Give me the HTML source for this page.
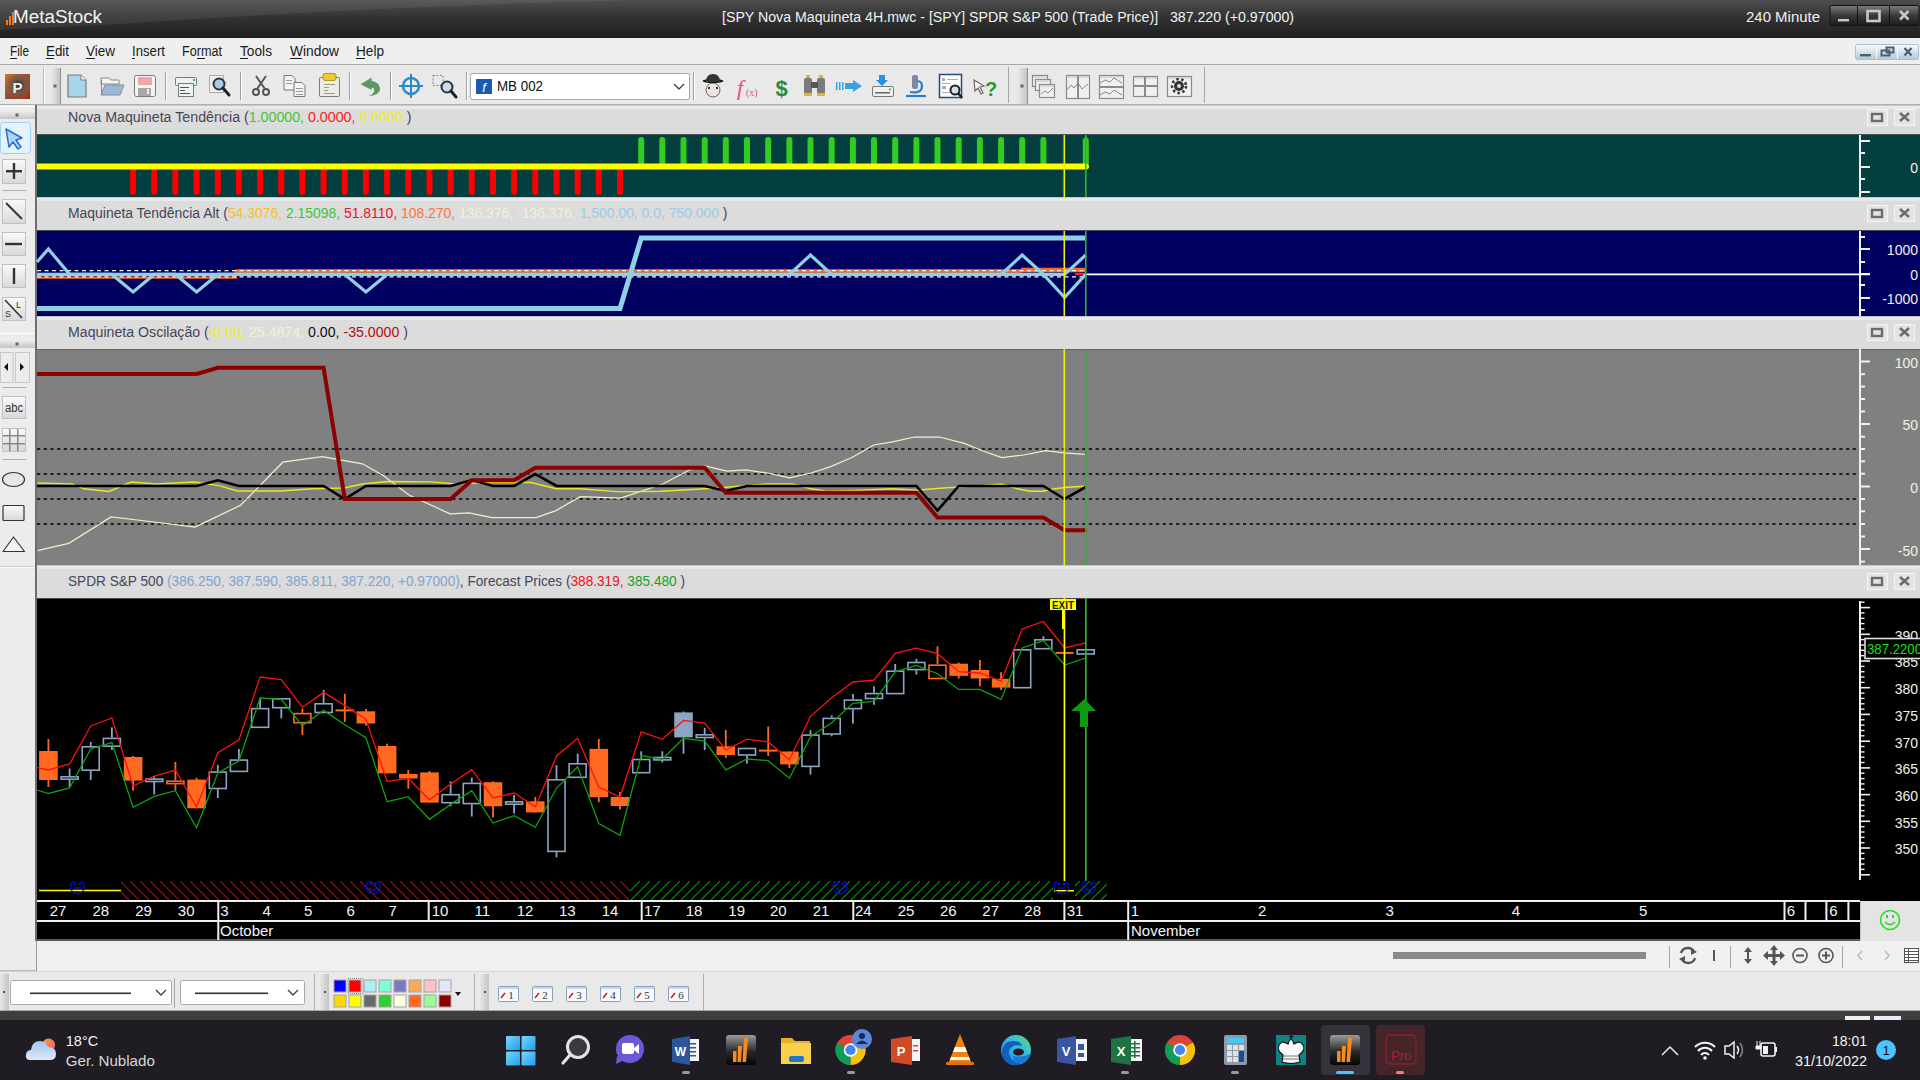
<!DOCTYPE html><html><head><meta charset="utf-8"><style>
html,body{margin:0;padding:0;width:1920px;height:1080px;overflow:hidden;background:#ececec;}
svg{display:block;font-family:"Liberation Sans", sans-serif;}
</style></head><body>
<svg width="1920" height="1080" viewBox="0 0 1920 1080">
<defs>
<linearGradient id="tg" x1="0" y1="0" x2="0" y2="1"><stop offset="0" stop-color="#4e4e4e"/><stop offset="0.45" stop-color="#333"/><stop offset="1" stop-color="#1f1f1f"/></linearGradient>
<linearGradient id="hdr" x1="0" y1="0" x2="0" y2="1"><stop offset="0" stop-color="#e6e6e6"/><stop offset="1" stop-color="#dadada"/></linearGradient>
<pattern id="hatchR" patternUnits="userSpaceOnUse" width="10" height="19" x="0" y="881"><path d="M-10 0 L9 19 M0 0 L19 19" stroke="#c80000" stroke-width="1.2"/></pattern>
<pattern id="hatchG" patternUnits="userSpaceOnUse" width="10" height="19" x="0" y="881"><path d="M-9 19 L10 0 M1 19 L20 0" stroke="#0a900a" stroke-width="1.1"/></pattern>
</defs>
<rect x="0" y="0" width="1920" height="38" fill="url(#tg)"/>
<path d="M0 0 H640 Q380 6 120 24 L0 30 Z" fill="#ffffff" opacity="0.07"/>
<g fill="#f07a20"><rect x="6" y="20" width="2" height="5"/><rect x="9" y="16" width="2" height="9"/><rect x="12" y="12" width="2" height="13"/></g>
<text x="13" y="23" font-size="18" fill="#f4f4f4" textLength="89" lengthAdjust="spacingAndGlyphs">MetaStock</text>
<text x="722" y="22" font-size="14" fill="#f2f2f2" textLength="572" lengthAdjust="spacingAndGlyphs" xml:space="preserve">[SPY Nova Maquineta 4H.mwc - [SPY] SPDR S&amp;P 500 (Trade Price)]   387.220 (+0.97000)</text>
<text x="1820" y="22" font-size="14" fill="#f2f2f2" text-anchor="end" textLength="74" lengthAdjust="spacingAndGlyphs">240 Minute</text>
<defs><linearGradient id="wbtn" x1="0" y1="0" x2="0" y2="1"><stop offset="0" stop-color="#7c7c7c"/><stop offset="0.5" stop-color="#3a3a3a"/><stop offset="1" stop-color="#1c1c1c"/></linearGradient><linearGradient id="mbtn" x1="0" y1="0" x2="0" y2="1"><stop offset="0" stop-color="#fafcfd"/><stop offset="1" stop-color="#b4c8d6"/></linearGradient></defs>
<rect x="1830" y="5.5" width="89" height="20" rx="2" fill="url(#wbtn)" stroke="#141414" stroke-width="1"/>
<rect x="1857" y="6" width="1" height="19" fill="#111"/><rect x="1889" y="6" width="1" height="19" fill="#111"/>
<rect x="1838" y="19" width="11" height="2.4" fill="#c8c8c8"/>
<rect x="1867.5" y="11" width="12" height="10" fill="none" stroke="#c8c8c8" stroke-width="2.6"/>
<path d="M1900 11 L1908.5 19.5 M1908.5 11 L1900 19.5" stroke="#c8c8c8" stroke-width="2.6"/>
<rect x="0" y="38" width="1920" height="26" fill="#efefef"/>
<rect x="0" y="64" width="1920" height="1" fill="#a8a8a8"/>
<text x="10" y="56" font-size="14" fill="#1a1a1a" textLength="19" lengthAdjust="spacingAndGlyphs">File</text>
<text x="46" y="56" font-size="14" fill="#1a1a1a" textLength="23" lengthAdjust="spacingAndGlyphs">Edit</text>
<text x="86" y="56" font-size="14" fill="#1a1a1a" textLength="29" lengthAdjust="spacingAndGlyphs">View</text>
<text x="132" y="56" font-size="14" fill="#1a1a1a" textLength="33" lengthAdjust="spacingAndGlyphs">Insert</text>
<text x="182" y="56" font-size="14" fill="#1a1a1a" textLength="40" lengthAdjust="spacingAndGlyphs">Format</text>
<text x="240" y="56" font-size="14" fill="#1a1a1a" textLength="32" lengthAdjust="spacingAndGlyphs">Tools</text>
<text x="290" y="56" font-size="14" fill="#1a1a1a" textLength="49" lengthAdjust="spacingAndGlyphs">Window</text>
<text x="356" y="56" font-size="14" fill="#1a1a1a" textLength="28" lengthAdjust="spacingAndGlyphs">Help</text>
<rect x="10" y="58" width="7" height="1" fill="#1a1a1a"/>
<rect x="46" y="58" width="8" height="1" fill="#1a1a1a"/>
<rect x="86" y="58" width="9" height="1" fill="#1a1a1a"/>
<rect x="132" y="58" width="3" height="1" fill="#1a1a1a"/>
<rect x="197" y="58" width="8" height="1" fill="#1a1a1a"/>
<rect x="240" y="58" width="8" height="1" fill="#1a1a1a"/>
<rect x="290" y="58" width="12" height="1" fill="#1a1a1a"/>
<rect x="356" y="58" width="9" height="1" fill="#1a1a1a"/>
<rect x="1855.5" y="44.5" width="63" height="15" rx="2" fill="url(#mbtn)" stroke="#a8c0d0"/>
<rect x="1876" y="45" width="1" height="14" fill="#f4f8fa"/><rect x="1897" y="45" width="1" height="14" fill="#f4f8fa"/>
<rect x="1860" y="54" width="11" height="2.4" fill="#4a6070"/>
<rect x="1881.5" y="50.5" width="8" height="5" fill="none" stroke="#4a6070" stroke-width="2"/><rect x="1886.5" y="47.5" width="7" height="5" fill="none" stroke="#4a6070" stroke-width="2"/>
<path d="M1904.5 48 L1911.5 55.5 M1911.5 48 L1904.5 55.5" stroke="#4a6070" stroke-width="2.4"/>
<rect x="0" y="65" width="1920" height="40" fill="#e9e9e9"/>
<rect x="0" y="104" width="1920" height="1" fill="#b0b0b0"/>
<rect x="0" y="105" width="36" height="866" fill="#ececec"/>
<rect x="36" y="105" width="1884" height="29" fill="#dcdcdc"/>
<rect x="37" y="105" width="1883" height="4" fill="#e9e9e9"/>
<rect x="37" y="105" width="1883" height="1" fill="#c8c8c8"/>
<rect x="1867.5" y="109.5" width="20" height="16" fill="#e4e4e4" stroke="#f4f4f4"/>
<rect x="1894.5" y="109.5" width="20" height="16" fill="#e4e4e4" stroke="#f4f4f4"/>
<rect x="1872" y="114" width="10" height="7" fill="none" stroke="#6c6c6c" stroke-width="2.4"/>
<path d="M1900 113 L1909 121 M1909 113 L1900 121" stroke="#6c6c6c" stroke-width="2.6"/>
<rect x="37" y="134" width="1883" height="63" fill="#033f3f"/>
<rect x="36" y="197" width="1884" height="33" fill="#dcdcdc"/>
<rect x="37" y="197" width="1883" height="4" fill="#e9e9e9"/>
<rect x="37" y="197" width="1883" height="1" fill="#c8c8c8"/>
<rect x="1867.5" y="205.5" width="20" height="16" fill="#e4e4e4" stroke="#f4f4f4"/>
<rect x="1894.5" y="205.5" width="20" height="16" fill="#e4e4e4" stroke="#f4f4f4"/>
<rect x="1872" y="210" width="10" height="7" fill="none" stroke="#6c6c6c" stroke-width="2.4"/>
<path d="M1900 209 L1909 217 M1909 209 L1900 217" stroke="#6c6c6c" stroke-width="2.6"/>
<rect x="37" y="230" width="1883" height="86" fill="#000060"/>
<rect x="36" y="316" width="1884" height="33" fill="#dcdcdc"/>
<rect x="37" y="316" width="1883" height="4" fill="#e9e9e9"/>
<rect x="37" y="316" width="1883" height="1" fill="#c8c8c8"/>
<rect x="1867.5" y="324.5" width="20" height="16" fill="#e4e4e4" stroke="#f4f4f4"/>
<rect x="1894.5" y="324.5" width="20" height="16" fill="#e4e4e4" stroke="#f4f4f4"/>
<rect x="1872" y="329" width="10" height="7" fill="none" stroke="#6c6c6c" stroke-width="2.4"/>
<path d="M1900 328 L1909 336 M1909 328 L1900 336" stroke="#6c6c6c" stroke-width="2.6"/>
<rect x="37" y="349" width="1883" height="216" fill="#808080"/>
<rect x="36" y="565" width="1884" height="33" fill="#dcdcdc"/>
<rect x="37" y="565" width="1883" height="4" fill="#e9e9e9"/>
<rect x="37" y="565" width="1883" height="1" fill="#c8c8c8"/>
<rect x="1867.5" y="573.5" width="20" height="16" fill="#e4e4e4" stroke="#f4f4f4"/>
<rect x="1894.5" y="573.5" width="20" height="16" fill="#e4e4e4" stroke="#f4f4f4"/>
<rect x="1872" y="578" width="10" height="7" fill="none" stroke="#6c6c6c" stroke-width="2.4"/>
<path d="M1900 577 L1909 585 M1909 577 L1900 585" stroke="#6c6c6c" stroke-width="2.6"/>
<rect x="37" y="598" width="1883" height="303" fill="#000000"/>
<rect x="37" y="134" width="1883" height="1" fill="#5a5a5a" opacity="0.8"/>
<rect x="37" y="230" width="1883" height="1" fill="#5a5a5a" opacity="0.8"/>
<rect x="37" y="349" width="1883" height="1" fill="#5a5a5a" opacity="0.8"/>
<rect x="37" y="598" width="1883" height="1" fill="#5a5a5a" opacity="0.8"/>
<rect x="35" y="105" width="2" height="836" fill="#6e6e6e"/>
<rect x="36" y="941" width="1" height="30" fill="#9a9a9a"/>
<rect x="0" y="566" width="35" height="1" fill="#d0d0d0"/><rect x="0" y="567" width="35" height="1" fill="#fafafa"/>
<text x="68" y="122" font-size="14" xml:space="preserve" textLength="343.6" lengthAdjust="spacingAndGlyphs"><tspan fill="#45455a">Nova Maquineta Tendência (</tspan><tspan fill="#3cc43c">1.00000, </tspan><tspan fill="#ff2020">0.0000, </tspan><tspan fill="#eeee20">0.0000 </tspan><tspan fill="#45455a">)</tspan></text>
<text x="68" y="218" font-size="14" xml:space="preserve" textLength="659.5" lengthAdjust="spacingAndGlyphs"><tspan fill="#45455a">Maquineta Tendência Alt (</tspan><tspan fill="#f8c020">54.3076, </tspan><tspan fill="#3cc43c">2.15098, </tspan><tspan fill="#ee1020">51.8110, </tspan><tspan fill="#ff7040">108.270, </tspan><tspan fill="#f4f0d8">136.376, </tspan><tspan fill="#f4f0d8">-136.376, </tspan><tspan fill="#98cce8">1,500.00, 0.0, 750.000 </tspan><tspan fill="#45455a">)</tspan></text>
<text x="68" y="337" font-size="14" xml:space="preserve" textLength="340" lengthAdjust="spacingAndGlyphs"><tspan fill="#45455a">Maquineta Oscilação (</tspan><tspan fill="#eeee20">-0.00, </tspan><tspan fill="#f4f0d8">25.4874, </tspan><tspan fill="#101010">0.00, </tspan><tspan fill="#b01010">-35.0000 </tspan><tspan fill="#45455a">)</tspan></text>
<text x="68" y="586" font-size="14" xml:space="preserve" textLength="617" lengthAdjust="spacingAndGlyphs"><tspan fill="#45455a">SPDR S&amp;P 500 </tspan><tspan fill="#7ea4cc">(386.250, 387.590, 385.811, 387.220, +0.97000)</tspan><tspan fill="#45455a">, Forecast Prices (</tspan><tspan fill="#ee1020">388.319, </tspan><tspan fill="#20a020">385.480 </tspan><tspan fill="#45455a">)</tspan></text>
<rect x="1859" y="135" width="2" height="62" fill="#f0f0f0"/>
<rect x="1860" y="140" width="10" height="2" fill="#f0f0f0"/>
<rect x="1860" y="166" width="10" height="2" fill="#f0f0f0"/>
<rect x="1860" y="191" width="10" height="2" fill="#f0f0f0"/>
<rect x="1860" y="152" width="5" height="2" fill="#f0f0f0"/>
<rect x="1860" y="178" width="5" height="2" fill="#f0f0f0"/>
<text x="1918" y="173" font-size="14" fill="#f0f0e8" text-anchor="end">0</text>
<rect x="1859" y="231" width="2" height="85" fill="#f0f0f0"/>
<rect x="1860" y="248" width="10" height="2" fill="#f0f0f0"/>
<rect x="1860" y="273" width="10" height="2" fill="#f0f0f0"/>
<rect x="1860" y="297" width="10" height="2" fill="#f0f0f0"/>
<rect x="1860" y="236" width="5" height="2" fill="#f0f0f0"/>
<rect x="1860" y="261" width="5" height="2" fill="#f0f0f0"/>
<rect x="1860" y="284" width="5" height="2" fill="#f0f0f0"/>
<rect x="1860" y="309" width="5" height="2" fill="#f0f0f0"/>
<text x="1918" y="255" font-size="14" fill="#f0f0e8" text-anchor="end">1000</text>
<text x="1918" y="280" font-size="14" fill="#f0f0e8" text-anchor="end">0</text>
<text x="1918" y="304" font-size="14" fill="#f0f0e8" text-anchor="end">-1000</text>
<rect x="1859" y="349" width="2" height="216" fill="#f0f0f0"/>
<rect x="1860" y="360.5" width="10" height="2" fill="#f0f0f0"/>
<rect x="1860" y="423" width="10" height="2" fill="#f0f0f0"/>
<rect x="1860" y="485.5" width="10" height="2" fill="#f0f0f0"/>
<rect x="1860" y="548" width="10" height="2" fill="#f0f0f0"/>
<rect x="1860" y="373.2" width="5" height="2" fill="#f0f0f0"/>
<rect x="1860" y="385.6" width="5" height="2" fill="#f0f0f0"/>
<rect x="1860" y="398" width="5" height="2" fill="#f0f0f0"/>
<rect x="1860" y="410.5" width="5" height="2" fill="#f0f0f0"/>
<rect x="1860" y="435.7" width="5" height="2" fill="#f0f0f0"/>
<rect x="1860" y="448" width="5" height="2" fill="#f0f0f0"/>
<rect x="1860" y="460.3" width="5" height="2" fill="#f0f0f0"/>
<rect x="1860" y="472.7" width="5" height="2" fill="#f0f0f0"/>
<rect x="1860" y="498" width="5" height="2" fill="#f0f0f0"/>
<rect x="1860" y="510.3" width="5" height="2" fill="#f0f0f0"/>
<rect x="1860" y="523" width="5" height="2" fill="#f0f0f0"/>
<rect x="1860" y="535.5" width="5" height="2" fill="#f0f0f0"/>
<rect x="1860" y="560.6" width="5" height="2" fill="#f0f0f0"/>
<text x="1918" y="368" font-size="14" fill="#f0f0e8" text-anchor="end">100</text>
<text x="1918" y="430" font-size="14" fill="#f0f0e8" text-anchor="end">50</text>
<text x="1918" y="493" font-size="14" fill="#f0f0e8" text-anchor="end">0</text>
<text x="1918" y="556" font-size="14" fill="#f0f0e8" text-anchor="end">-50</text>
<line x1="133.1" y1="170" x2="133.1" y2="192" stroke="#ff0000" stroke-width="6" stroke-linecap="round"/>
<line x1="154.2" y1="170" x2="154.2" y2="192" stroke="#ff0000" stroke-width="6" stroke-linecap="round"/>
<line x1="175.4" y1="170" x2="175.4" y2="192" stroke="#ff0000" stroke-width="6" stroke-linecap="round"/>
<line x1="196.6" y1="170" x2="196.6" y2="192" stroke="#ff0000" stroke-width="6" stroke-linecap="round"/>
<line x1="217.8" y1="170" x2="217.8" y2="192" stroke="#ff0000" stroke-width="6" stroke-linecap="round"/>
<line x1="238.9" y1="170" x2="238.9" y2="192" stroke="#ff0000" stroke-width="6" stroke-linecap="round"/>
<line x1="260.1" y1="170" x2="260.1" y2="192" stroke="#ff0000" stroke-width="6" stroke-linecap="round"/>
<line x1="281.3" y1="170" x2="281.3" y2="192" stroke="#ff0000" stroke-width="6" stroke-linecap="round"/>
<line x1="302.4" y1="170" x2="302.4" y2="192" stroke="#ff0000" stroke-width="6" stroke-linecap="round"/>
<line x1="323.6" y1="170" x2="323.6" y2="192" stroke="#ff0000" stroke-width="6" stroke-linecap="round"/>
<line x1="344.8" y1="170" x2="344.8" y2="192" stroke="#ff0000" stroke-width="6" stroke-linecap="round"/>
<line x1="365.9" y1="170" x2="365.9" y2="192" stroke="#ff0000" stroke-width="6" stroke-linecap="round"/>
<line x1="387.1" y1="170" x2="387.1" y2="192" stroke="#ff0000" stroke-width="6" stroke-linecap="round"/>
<line x1="408.3" y1="170" x2="408.3" y2="192" stroke="#ff0000" stroke-width="6" stroke-linecap="round"/>
<line x1="429.5" y1="170" x2="429.5" y2="192" stroke="#ff0000" stroke-width="6" stroke-linecap="round"/>
<line x1="450.6" y1="170" x2="450.6" y2="192" stroke="#ff0000" stroke-width="6" stroke-linecap="round"/>
<line x1="471.8" y1="170" x2="471.8" y2="192" stroke="#ff0000" stroke-width="6" stroke-linecap="round"/>
<line x1="493.0" y1="170" x2="493.0" y2="192" stroke="#ff0000" stroke-width="6" stroke-linecap="round"/>
<line x1="514.1" y1="170" x2="514.1" y2="192" stroke="#ff0000" stroke-width="6" stroke-linecap="round"/>
<line x1="535.3" y1="170" x2="535.3" y2="192" stroke="#ff0000" stroke-width="6" stroke-linecap="round"/>
<line x1="556.5" y1="170" x2="556.5" y2="192" stroke="#ff0000" stroke-width="6" stroke-linecap="round"/>
<line x1="577.6" y1="170" x2="577.6" y2="192" stroke="#ff0000" stroke-width="6" stroke-linecap="round"/>
<line x1="598.8" y1="170" x2="598.8" y2="192" stroke="#ff0000" stroke-width="6" stroke-linecap="round"/>
<line x1="620.0" y1="170" x2="620.0" y2="192" stroke="#ff0000" stroke-width="6" stroke-linecap="round"/>
<line x1="641.2" y1="140" x2="641.2" y2="163" stroke="#33cc22" stroke-width="6" stroke-linecap="round"/>
<line x1="662.3" y1="140" x2="662.3" y2="163" stroke="#33cc22" stroke-width="6" stroke-linecap="round"/>
<line x1="683.5" y1="140" x2="683.5" y2="163" stroke="#33cc22" stroke-width="6" stroke-linecap="round"/>
<line x1="704.7" y1="140" x2="704.7" y2="163" stroke="#33cc22" stroke-width="6" stroke-linecap="round"/>
<line x1="725.8" y1="140" x2="725.8" y2="163" stroke="#33cc22" stroke-width="6" stroke-linecap="round"/>
<line x1="747.0" y1="140" x2="747.0" y2="163" stroke="#33cc22" stroke-width="6" stroke-linecap="round"/>
<line x1="768.2" y1="140" x2="768.2" y2="163" stroke="#33cc22" stroke-width="6" stroke-linecap="round"/>
<line x1="789.4" y1="140" x2="789.4" y2="163" stroke="#33cc22" stroke-width="6" stroke-linecap="round"/>
<line x1="810.5" y1="140" x2="810.5" y2="163" stroke="#33cc22" stroke-width="6" stroke-linecap="round"/>
<line x1="831.7" y1="140" x2="831.7" y2="163" stroke="#33cc22" stroke-width="6" stroke-linecap="round"/>
<line x1="852.9" y1="140" x2="852.9" y2="163" stroke="#33cc22" stroke-width="6" stroke-linecap="round"/>
<line x1="874.0" y1="140" x2="874.0" y2="163" stroke="#33cc22" stroke-width="6" stroke-linecap="round"/>
<line x1="895.2" y1="140" x2="895.2" y2="163" stroke="#33cc22" stroke-width="6" stroke-linecap="round"/>
<line x1="916.4" y1="140" x2="916.4" y2="163" stroke="#33cc22" stroke-width="6" stroke-linecap="round"/>
<line x1="937.5" y1="140" x2="937.5" y2="163" stroke="#33cc22" stroke-width="6" stroke-linecap="round"/>
<line x1="958.7" y1="140" x2="958.7" y2="163" stroke="#33cc22" stroke-width="6" stroke-linecap="round"/>
<line x1="979.9" y1="140" x2="979.9" y2="163" stroke="#33cc22" stroke-width="6" stroke-linecap="round"/>
<line x1="1001.1" y1="140" x2="1001.1" y2="163" stroke="#33cc22" stroke-width="6" stroke-linecap="round"/>
<line x1="1022.2" y1="140" x2="1022.2" y2="163" stroke="#33cc22" stroke-width="6" stroke-linecap="round"/>
<line x1="1043.4" y1="140" x2="1043.4" y2="163" stroke="#33cc22" stroke-width="6" stroke-linecap="round"/>
<path d="M1082.8 164 V139.5 L1085.8 136 L1088.8 139.5 V164 Z" fill="#33cc22"/>
<rect x="37" y="163.5" width="1049" height="6" fill="#ffff00"/><circle cx="1086" cy="166.5" r="3" fill="#ffff00"/>
<polyline fill="none" stroke="#ff6a20" stroke-width="2.4" points="37,277.6 236,277.6 236,271 1021,271"/>
<polyline fill="none" stroke="#ff6a20" stroke-width="3.4" points="236,271 1021,271"/>
<polyline fill="none" stroke="#ff6a20" stroke-width="4.5" points="1021,270 1086,270"/>
<polyline fill="none" stroke="#ff2010" stroke-width="2" points="1075,274 1086,274"/>
<line x1="37" y1="270.6" x2="1086" y2="270.6" stroke="#f8f8f0" stroke-width="1.4" stroke-dasharray="4 3.5"/>
<line x1="37" y1="276.9" x2="1086" y2="276.9" stroke="#f8f8f0" stroke-width="1.4" stroke-dasharray="4 3.5"/>
<line x1="1086" y1="274.4" x2="1870" y2="274.4" stroke="#ffffff" stroke-width="1.6"/>
<polyline fill="none" stroke="#90d0e4" stroke-width="3.2" stroke-linejoin="miter" points="37.0,262.0 48.4,249.0 69.6,274.4 111.9,274.4 133.1,292.0 154.2,274.4 175.4,274.4 196.6,292.0 217.8,274.4 344.8,274.4 365.9,292.0 387.1,274.4 789.4,274.4 810.5,255.0 831.7,274.4 1001.1,274.4 1022.2,255.0 1043.4,274.4 1064.6,297.5 1085.7,274.4"/>
<polyline fill="none" stroke="#90d0e4" stroke-width="3.2" points="37,274.4 1064.6,274.4 1085.7,255"/>
<polyline fill="none" stroke="#90d0e4" stroke-width="5" points="37,308.5 620.0,308.5 641.2,238 1086,238"/>
<line x1="37" y1="449" x2="1858" y2="449" stroke="#000" stroke-width="1.6" stroke-dasharray="3.2 3.5"/>
<line x1="37" y1="474" x2="1858" y2="474" stroke="#000" stroke-width="1.6" stroke-dasharray="3.2 3.5"/>
<line x1="37" y1="499" x2="1858" y2="499" stroke="#000" stroke-width="1.6" stroke-dasharray="3.2 3.5"/>
<line x1="37" y1="524" x2="1858" y2="524" stroke="#000" stroke-width="1.6" stroke-dasharray="3.2 3.5"/>
<polyline fill="none" stroke="#f0f0c8" stroke-width="1.25" points="37.5,550.6 68.8,543.4 111.0,517.0 137.5,520.0 195.0,527.0 240.6,505.3 282.8,462.2 322.0,456.6 362.5,463.8 384.0,476.0 409.0,495.0 450.0,513.8 469.0,512.8 492.0,517.5 536.0,517.5 556.0,510.6 580.0,496.6 620.6,498.0 662.8,484.0 689.4,470.0 705.0,466.0 726.9,471.0 745.6,470.0 767.5,473.0 789.4,477.8 811.0,473.0 830.0,466.9 851.9,457.5 873.8,445.0 892.5,441.9 914.4,437.0 939.4,437.0 964.4,443.4 983.0,451.0 1001.9,457.5 1023.8,455.0 1045.6,450.6 1064.4,452.8 1084.7,454.4"/>
<polyline fill="none" stroke="#e8e820" stroke-width="1.4" points="37.5,483.0 72.0,484.0 84.0,488.8 109.0,491.5 131.0,482.0 156.0,484.0 194.0,482.0 219.0,485.6 237.5,491.0 281.0,491.0 312.5,488.8 344.0,488.0 362.5,484.0 387.5,481.5 431.0,481.9 456.0,484.0 487.5,482.5 531.0,482.5 556.0,488.8 580.0,488.8 620.6,491.9 661.0,491.2 705.0,488.8 726.9,487.2 745.6,485.6 767.5,484.0 792.5,484.0 811.0,488.8 826.9,491.2 861.0,490.3 892.5,488.8 917.5,490.3 933.0,488.8 955.0,487.2 980.0,485.6 1001.9,484.0 1017.5,488.8 1030.0,491.2 1042.5,491.2 1055.0,488.8 1067.5,487.2 1084.7,486.2"/>
<polyline fill="none" stroke="#000000" stroke-width="2.6" points="37.0,486.0 196.6,486.0 217.8,480.3 238.9,486.0 323.6,486.0 344.8,499.0 365.9,486.0 450.6,486.0 471.8,480.0 493.0,486.0 514.1,486.0 535.3,474.0 556.5,486.0 704.7,486.0 725.8,491.0 747.0,486.0 916.4,486.0 937.5,510.6 958.7,486.0 1043.4,486.0 1064.6,499.0 1085.7,487.0"/>
<polyline fill="none" stroke="#8b0000" stroke-width="4" points="37.0,374.0 196.6,374.0 217.8,367.8 323.6,367.8 344.8,499.0 450.6,499.0 471.8,480.3 514.1,480.3 535.3,467.8 704.7,467.8 725.8,492.8 916.4,492.8 937.5,517.5 1043.4,517.5 1064.6,530.3 1086.7,530.3"/>
<rect x="1063.5" y="135" width="1.6" height="62" fill="#f0f000"/>
<rect x="1085" y="135" width="1.6" height="62" fill="#30b030"/>
<rect x="1063.5" y="231" width="1.6" height="85" fill="#f0f000"/>
<rect x="1085" y="231" width="1.6" height="85" fill="#30b030"/>
<rect x="1063.5" y="349" width="1.6" height="216" fill="#f0f000"/>
<rect x="1085" y="349" width="1.6" height="216" fill="#30b030"/>
<rect x="47.5" y="739.0" width="1.8" height="48.0" fill="#ff6a20"/>
<rect x="39.1" y="751.0" width="18.6" height="29.0" fill="#ff6a20"/>
<rect x="68.7" y="768.5" width="1.8" height="7.5" fill="#8aa6c4"/>
<rect x="68.7" y="780.0" width="1.8" height="7.0" fill="#8aa6c4"/>
<rect x="61.1" y="776.8" width="17.0" height="2.4" fill="none" stroke="#8aa6c4" stroke-width="1.6"/>
<rect x="89.8" y="742.0" width="1.8" height="4.0" fill="#8aa6c4"/>
<rect x="89.8" y="771.0" width="1.8" height="9.0" fill="#8aa6c4"/>
<rect x="82.2" y="746.8" width="17.0" height="23.4" fill="none" stroke="#8aa6c4" stroke-width="1.6"/>
<rect x="111.0" y="727.4" width="1.8" height="10.2" fill="#8aa6c4"/>
<rect x="111.0" y="747.0" width="1.8" height="3.0" fill="#8aa6c4"/>
<rect x="103.4" y="738.4" width="17.0" height="7.8" fill="none" stroke="#8aa6c4" stroke-width="1.6"/>
<rect x="132.2" y="756.0" width="1.8" height="34.7" fill="#ff6a20"/>
<rect x="123.8" y="757.0" width="18.6" height="23.6" fill="#ff6a20"/>
<rect x="153.3" y="776.0" width="1.8" height="2.7" fill="#8aa6c4"/>
<rect x="153.3" y="782.0" width="1.8" height="12.4" fill="#8aa6c4"/>
<rect x="145.8" y="779.1" width="17.0" height="2.4" fill="none" stroke="#8aa6c4" stroke-width="1.6"/>
<rect x="174.5" y="762.0" width="1.8" height="18.6" fill="#ff6a20"/>
<rect x="174.5" y="784.3" width="1.8" height="5.7" fill="#ff6a20"/>
<rect x="166.9" y="781.2" width="17.0" height="2.4" fill="none" stroke="#ff6a20" stroke-width="1.6"/>
<rect x="195.7" y="777.8" width="1.8" height="30.5" fill="#ff6a20"/>
<rect x="187.3" y="779.6" width="18.6" height="28.7" fill="#ff6a20"/>
<rect x="216.9" y="764.8" width="1.8" height="6.5" fill="#8aa6c4"/>
<rect x="216.9" y="789.3" width="1.8" height="8.7" fill="#8aa6c4"/>
<rect x="209.3" y="772.1" width="17.0" height="16.4" fill="none" stroke="#8aa6c4" stroke-width="1.6"/>
<rect x="238.0" y="749.0" width="1.8" height="10.3" fill="#8aa6c4"/>
<rect x="230.4" y="760.1" width="17.0" height="11.3" fill="none" stroke="#8aa6c4" stroke-width="1.6"/>
<rect x="259.2" y="698.0" width="1.8" height="9.8" fill="#8aa6c4"/>
<rect x="251.6" y="708.6" width="17.0" height="18.7" fill="none" stroke="#8aa6c4" stroke-width="1.6"/>
<rect x="280.4" y="708.5" width="1.8" height="9.8" fill="#8aa6c4"/>
<rect x="272.8" y="698.8" width="17.0" height="8.9" fill="none" stroke="#8aa6c4" stroke-width="1.6"/>
<rect x="301.5" y="708.5" width="1.8" height="4.3" fill="#ff6a20"/>
<rect x="301.5" y="723.5" width="1.8" height="11.5" fill="#ff6a20"/>
<rect x="293.9" y="713.6" width="17.0" height="9.1" fill="none" stroke="#ff6a20" stroke-width="1.6"/>
<rect x="322.7" y="690.0" width="1.8" height="13.0" fill="#8aa6c4"/>
<rect x="315.1" y="703.8" width="17.0" height="8.7" fill="none" stroke="#8aa6c4" stroke-width="1.6"/>
<rect x="343.9" y="693.7" width="1.8" height="28.3" fill="#ff6a20"/>
<rect x="335.5" y="709.4" width="18.6" height="2" fill="#ff6a20"/>
<rect x="365.1" y="709.0" width="1.8" height="16.7" fill="#ff6a20"/>
<rect x="356.6" y="711.3" width="18.6" height="12.2" fill="#ff6a20"/>
<rect x="386.2" y="743.7" width="1.8" height="29.6" fill="#ff6a20"/>
<rect x="377.8" y="746.0" width="18.6" height="27.3" fill="#ff6a20"/>
<rect x="407.4" y="770.0" width="1.8" height="18.7" fill="#ff6a20"/>
<rect x="399.0" y="773.9" width="18.6" height="4.6" fill="#ff6a20"/>
<rect x="428.6" y="771.0" width="1.8" height="31.6" fill="#ff6a20"/>
<rect x="420.2" y="772.4" width="18.6" height="30.2" fill="#ff6a20"/>
<rect x="449.7" y="781.3" width="1.8" height="12.6" fill="#8aa6c4"/>
<rect x="449.7" y="803.5" width="1.8" height="2.8" fill="#8aa6c4"/>
<rect x="442.1" y="794.7" width="17.0" height="8.0" fill="none" stroke="#8aa6c4" stroke-width="1.6"/>
<rect x="470.9" y="777.6" width="1.8" height="5.0" fill="#8aa6c4"/>
<rect x="470.9" y="804.4" width="1.8" height="12.1" fill="#8aa6c4"/>
<rect x="463.3" y="783.4" width="17.0" height="20.2" fill="none" stroke="#8aa6c4" stroke-width="1.6"/>
<rect x="492.1" y="781.3" width="1.8" height="36.1" fill="#ff6a20"/>
<rect x="483.7" y="782.2" width="18.6" height="24.1" fill="#ff6a20"/>
<rect x="513.2" y="795.0" width="1.8" height="6.5" fill="#8aa6c4"/>
<rect x="513.2" y="804.4" width="1.8" height="9.1" fill="#8aa6c4"/>
<rect x="505.6" y="801.8" width="17.0" height="2.4" fill="none" stroke="#8aa6c4" stroke-width="1.6"/>
<rect x="534.4" y="797.0" width="1.8" height="15.4" fill="#ff6a20"/>
<rect x="526.0" y="801.3" width="18.6" height="11.1" fill="#ff6a20"/>
<rect x="555.6" y="765.2" width="1.8" height="13.8" fill="#8aa6c4"/>
<rect x="555.6" y="852.2" width="1.8" height="5.2" fill="#8aa6c4"/>
<rect x="548.0" y="779.8" width="17.0" height="71.6" fill="none" stroke="#8aa6c4" stroke-width="1.6"/>
<rect x="576.8" y="753.7" width="1.8" height="9.3" fill="#8aa6c4"/>
<rect x="569.1" y="763.8" width="17.0" height="13.5" fill="none" stroke="#8aa6c4" stroke-width="1.6"/>
<rect x="597.9" y="738.9" width="1.8" height="63.3" fill="#ff6a20"/>
<rect x="589.5" y="748.9" width="18.6" height="48.3" fill="#ff6a20"/>
<rect x="619.1" y="792.0" width="1.8" height="17.6" fill="#ff6a20"/>
<rect x="610.7" y="797.0" width="18.6" height="9.0" fill="#ff6a20"/>
<rect x="640.3" y="751.3" width="1.8" height="7.4" fill="#8aa6c4"/>
<rect x="632.7" y="759.5" width="17.0" height="13.2" fill="none" stroke="#8aa6c4" stroke-width="1.6"/>
<rect x="661.4" y="751.3" width="1.8" height="6.5" fill="#8aa6c4"/>
<rect x="661.4" y="759.6" width="1.8" height="2.8" fill="#8aa6c4"/>
<rect x="653.8" y="757.5" width="17.0" height="2.4" fill="none" stroke="#8aa6c4" stroke-width="1.6"/>
<rect x="682.6" y="711.5" width="1.8" height="42.2" fill="#8aa6c4"/>
<rect x="674.2" y="712.4" width="18.6" height="25.0" fill="#8aa6c4"/>
<rect x="703.8" y="727.8" width="1.8" height="6.2" fill="#8aa6c4"/>
<rect x="703.8" y="738.3" width="1.8" height="11.7" fill="#8aa6c4"/>
<rect x="696.2" y="734.8" width="17.0" height="2.7" fill="none" stroke="#8aa6c4" stroke-width="1.6"/>
<rect x="724.9" y="730.0" width="1.8" height="27.8" fill="#ff6a20"/>
<rect x="716.5" y="746.3" width="18.6" height="8.7" fill="#ff6a20"/>
<rect x="746.1" y="755.8" width="1.8" height="7.8" fill="#8aa6c4"/>
<rect x="738.5" y="748.5" width="17.0" height="6.5" fill="none" stroke="#8aa6c4" stroke-width="1.6"/>
<rect x="767.3" y="726.5" width="1.8" height="29.5" fill="#ff6a20"/>
<rect x="758.9" y="749.6" width="18.6" height="2" fill="#ff6a20"/>
<rect x="788.5" y="751.5" width="1.8" height="16.5" fill="#ff6a20"/>
<rect x="780.1" y="751.5" width="18.6" height="12.9" fill="#ff6a20"/>
<rect x="809.6" y="730.2" width="1.8" height="4.1" fill="#8aa6c4"/>
<rect x="809.6" y="767.2" width="1.8" height="7.4" fill="#8aa6c4"/>
<rect x="802.0" y="735.1" width="17.0" height="31.3" fill="none" stroke="#8aa6c4" stroke-width="1.6"/>
<rect x="830.8" y="715.4" width="1.8" height="2.2" fill="#8aa6c4"/>
<rect x="830.8" y="734.8" width="1.8" height="1.5" fill="#8aa6c4"/>
<rect x="823.2" y="718.4" width="17.0" height="15.6" fill="none" stroke="#8aa6c4" stroke-width="1.6"/>
<rect x="852.0" y="694.0" width="1.8" height="5.3" fill="#8aa6c4"/>
<rect x="852.0" y="709.4" width="1.8" height="14.3" fill="#8aa6c4"/>
<rect x="844.4" y="700.1" width="17.0" height="8.5" fill="none" stroke="#8aa6c4" stroke-width="1.6"/>
<rect x="873.1" y="686.3" width="1.8" height="6.5" fill="#8aa6c4"/>
<rect x="873.1" y="699.3" width="1.8" height="5.5" fill="#8aa6c4"/>
<rect x="865.5" y="693.6" width="17.0" height="4.9" fill="none" stroke="#8aa6c4" stroke-width="1.6"/>
<rect x="894.3" y="664.0" width="1.8" height="6.4" fill="#8aa6c4"/>
<rect x="886.7" y="671.2" width="17.0" height="22.4" fill="none" stroke="#8aa6c4" stroke-width="1.6"/>
<rect x="915.5" y="658.9" width="1.8" height="2.8" fill="#8aa6c4"/>
<rect x="915.5" y="670.4" width="1.8" height="4.2" fill="#8aa6c4"/>
<rect x="907.9" y="662.5" width="17.0" height="7.1" fill="none" stroke="#8aa6c4" stroke-width="1.6"/>
<rect x="936.6" y="646.3" width="1.8" height="18.1" fill="#ff6a20"/>
<rect x="929.0" y="665.2" width="17.0" height="13.3" fill="none" stroke="#ff6a20" stroke-width="1.6"/>
<rect x="957.8" y="662.6" width="1.8" height="15.9" fill="#ff6a20"/>
<rect x="949.4" y="663.7" width="18.6" height="12.1" fill="#ff6a20"/>
<rect x="979.0" y="660.0" width="1.8" height="26.2" fill="#ff6a20"/>
<rect x="970.6" y="670.0" width="18.6" height="8.5" fill="#ff6a20"/>
<rect x="1000.2" y="672.2" width="1.8" height="17.8" fill="#ff6a20"/>
<rect x="991.8" y="678.8" width="18.6" height="8.8" fill="#ff6a20"/>
<rect x="1013.7" y="649.8" width="17.0" height="37.9" fill="none" stroke="#8aa6c4" stroke-width="1.6"/>
<rect x="1042.5" y="636.2" width="1.8" height="2.8" fill="#8aa6c4"/>
<rect x="1034.9" y="639.8" width="17.0" height="8.9" fill="none" stroke="#8aa6c4" stroke-width="1.6"/>
<rect x="1063.7" y="652.9" width="1.8" height="0.5" fill="#ff6a20"/>
<rect x="1055.6" y="651.9" width="18.0" height="2" fill="#ff6a20"/>
<rect x="1077.2" y="649.8" width="17.0" height="4.2" fill="none" stroke="#8aa6c4" stroke-width="1.6"/>
<polyline fill="none" stroke="#ff1010" stroke-width="1.3" points="37.0,767.6 48.4,770.0 69.6,764.0 90.7,726.0 111.9,718.0 133.1,786.0 154.2,776.0 175.4,770.0 196.6,807.0 217.8,752.8 238.9,740.0 260.1,677.0 281.3,679.5 302.4,707.2 323.6,692.4 344.8,705.4 365.9,719.3 387.1,781.3 408.3,778.5 429.5,799.8 450.6,784.0 471.8,769.6 493.0,798.0 514.1,793.0 535.3,806.9 556.5,756.0 577.6,738.3 598.8,787.0 620.0,797.0 641.2,731.9 662.3,739.3 683.5,720.4 704.7,723.0 725.8,750.0 747.0,739.2 768.2,741.9 789.4,759.8 810.5,716.3 831.7,697.8 852.9,682.0 874.0,680.2 895.2,653.3 916.4,648.1 937.5,653.7 958.7,671.7 979.9,673.0 1001.1,681.2 1022.2,629.0 1043.4,621.5 1064.6,648.0 1085.7,642.8"/>
<polyline fill="none" stroke="#10a010" stroke-width="1.3" points="37.0,790.0 48.4,793.5 69.6,788.0 90.7,749.0 111.9,742.6 133.1,807.4 154.2,796.3 175.4,790.7 196.6,827.8 217.8,773.0 238.9,761.0 260.1,698.0 281.3,699.5 302.4,725.7 323.6,710.4 344.8,724.8 365.9,737.8 387.1,801.7 408.3,796.7 429.5,819.3 450.6,804.4 471.8,790.6 493.0,823.0 514.1,815.6 535.3,827.2 556.5,788.3 577.6,766.7 598.8,823.5 620.0,835.2 641.2,755.6 662.3,759.3 683.5,738.3 704.7,741.0 725.8,769.8 747.0,759.0 768.2,760.7 789.4,778.3 810.5,736.7 831.7,722.8 852.9,703.3 874.0,701.5 895.2,671.9 916.4,665.4 937.5,673.7 958.7,689.4 979.9,689.4 1001.1,699.4 1022.2,648.0 1043.4,640.6 1064.6,665.0 1085.7,658.0"/>
<rect x="1063.6" y="598" width="1.7" height="283" fill="#ffff00"/>
<rect x="1085" y="598" width="1.7" height="283" fill="#30b030"/>
<rect x="1050" y="599" width="26" height="11" fill="#ffff00"/>
<text x="1063" y="608.5" font-size="10" font-weight="bold" fill="#202000" text-anchor="middle" textLength="22" lengthAdjust="spacingAndGlyphs">EXIT</text>
<rect x="1062" y="610" width="3" height="19" fill="#ffff00"/>
<path d="M1084.4 699 L1096 711 L1088 711 L1088 727 L1080 727 L1080 711 L1071 711 Z" fill="#109810"/>
<rect x="1859" y="601" width="2" height="279" fill="#f0f0f0"/>
<rect x="1860" y="874.0" width="10" height="1.6" fill="#f0f0f0"/>
<rect x="1860" y="868.7" width="4.5" height="1.4" fill="#f0f0f0"/>
<rect x="1860" y="863.4" width="4.5" height="1.4" fill="#f0f0f0"/>
<rect x="1860" y="858.0" width="4.5" height="1.4" fill="#f0f0f0"/>
<rect x="1860" y="852.7" width="4.5" height="1.4" fill="#f0f0f0"/>
<rect x="1860" y="847.2" width="10" height="1.6" fill="#f0f0f0"/>
<rect x="1860" y="842.0" width="4.5" height="1.4" fill="#f0f0f0"/>
<rect x="1860" y="836.7" width="4.5" height="1.4" fill="#f0f0f0"/>
<rect x="1860" y="831.3" width="4.5" height="1.4" fill="#f0f0f0"/>
<rect x="1860" y="826.0" width="4.5" height="1.4" fill="#f0f0f0"/>
<rect x="1860" y="820.5" width="10" height="1.6" fill="#f0f0f0"/>
<rect x="1860" y="815.3" width="4.5" height="1.4" fill="#f0f0f0"/>
<rect x="1860" y="809.9" width="4.5" height="1.4" fill="#f0f0f0"/>
<rect x="1860" y="804.6" width="4.5" height="1.4" fill="#f0f0f0"/>
<rect x="1860" y="799.3" width="4.5" height="1.4" fill="#f0f0f0"/>
<rect x="1860" y="793.8" width="10" height="1.6" fill="#f0f0f0"/>
<rect x="1860" y="788.6" width="4.5" height="1.4" fill="#f0f0f0"/>
<rect x="1860" y="783.2" width="4.5" height="1.4" fill="#f0f0f0"/>
<rect x="1860" y="777.9" width="4.5" height="1.4" fill="#f0f0f0"/>
<rect x="1860" y="772.5" width="4.5" height="1.4" fill="#f0f0f0"/>
<rect x="1860" y="767.1" width="10" height="1.6" fill="#f0f0f0"/>
<rect x="1860" y="761.8" width="4.5" height="1.4" fill="#f0f0f0"/>
<rect x="1860" y="756.5" width="4.5" height="1.4" fill="#f0f0f0"/>
<rect x="1860" y="751.2" width="4.5" height="1.4" fill="#f0f0f0"/>
<rect x="1860" y="745.8" width="4.5" height="1.4" fill="#f0f0f0"/>
<rect x="1860" y="740.4" width="10" height="1.6" fill="#f0f0f0"/>
<rect x="1860" y="735.1" width="4.5" height="1.4" fill="#f0f0f0"/>
<rect x="1860" y="729.8" width="4.5" height="1.4" fill="#f0f0f0"/>
<rect x="1860" y="724.4" width="4.5" height="1.4" fill="#f0f0f0"/>
<rect x="1860" y="719.1" width="4.5" height="1.4" fill="#f0f0f0"/>
<rect x="1860" y="713.6" width="10" height="1.6" fill="#f0f0f0"/>
<rect x="1860" y="708.4" width="4.5" height="1.4" fill="#f0f0f0"/>
<rect x="1860" y="703.1" width="4.5" height="1.4" fill="#f0f0f0"/>
<rect x="1860" y="697.7" width="4.5" height="1.4" fill="#f0f0f0"/>
<rect x="1860" y="692.4" width="4.5" height="1.4" fill="#f0f0f0"/>
<rect x="1860" y="686.9" width="10" height="1.6" fill="#f0f0f0"/>
<rect x="1860" y="681.7" width="4.5" height="1.4" fill="#f0f0f0"/>
<rect x="1860" y="676.3" width="4.5" height="1.4" fill="#f0f0f0"/>
<rect x="1860" y="671.0" width="4.5" height="1.4" fill="#f0f0f0"/>
<rect x="1860" y="665.7" width="4.5" height="1.4" fill="#f0f0f0"/>
<rect x="1860" y="660.2" width="10" height="1.6" fill="#f0f0f0"/>
<rect x="1860" y="655.0" width="4.5" height="1.4" fill="#f0f0f0"/>
<rect x="1860" y="649.6" width="4.5" height="1.4" fill="#f0f0f0"/>
<rect x="1860" y="644.3" width="4.5" height="1.4" fill="#f0f0f0"/>
<rect x="1860" y="638.9" width="4.5" height="1.4" fill="#f0f0f0"/>
<rect x="1860" y="633.5" width="10" height="1.6" fill="#f0f0f0"/>
<rect x="1860" y="628.2" width="4.5" height="1.4" fill="#f0f0f0"/>
<rect x="1860" y="622.9" width="4.5" height="1.4" fill="#f0f0f0"/>
<rect x="1860" y="617.6" width="4.5" height="1.4" fill="#f0f0f0"/>
<rect x="1860" y="612.2" width="4.5" height="1.4" fill="#f0f0f0"/>
<rect x="1860" y="606.8" width="10" height="1.6" fill="#f0f0f0"/>
<rect x="1860" y="601.5" width="4.5" height="1.4" fill="#f0f0f0"/>
<text x="1918" y="640.6" font-size="14" fill="#f0f0e8" text-anchor="end">390</text>
<text x="1918" y="667.3" font-size="14" fill="#f0f0e8" text-anchor="end">385</text>
<text x="1918" y="694.0" font-size="14" fill="#f0f0e8" text-anchor="end">380</text>
<text x="1918" y="720.7" font-size="14" fill="#f0f0e8" text-anchor="end">375</text>
<text x="1918" y="747.5" font-size="14" fill="#f0f0e8" text-anchor="end">370</text>
<text x="1918" y="774.2" font-size="14" fill="#f0f0e8" text-anchor="end">365</text>
<text x="1918" y="800.9" font-size="14" fill="#f0f0e8" text-anchor="end">360</text>
<text x="1918" y="827.6" font-size="14" fill="#f0f0e8" text-anchor="end">355</text>
<text x="1918" y="854.3" font-size="14" fill="#f0f0e8" text-anchor="end">350</text>
<rect x="1865" y="638.5" width="58" height="20" fill="#000" stroke="#e0e0e0" stroke-width="1.6"/>
<text x="1867" y="654" font-size="14" fill="#10e010" textLength="55" lengthAdjust="spacingAndGlyphs">387.2200</text>
<rect x="121" y="881" width="509" height="19" fill="url(#hatchR)"/>
<rect x="630" y="881" width="423" height="19" fill="url(#hatchG)"/>
<rect x="1075" y="881" width="32" height="19" fill="url(#hatchG)"/>
<line x1="39" y1="890.5" x2="121" y2="890.5" stroke="#ffff00" stroke-width="1.5"/>
<line x1="1054" y1="890.7" x2="1074" y2="890.7" stroke="#ffff00" stroke-width="1.5"/>
<g fill="none" stroke="#0010d0" stroke-width="1.3"><path d="M73.5 881 A7 7 0 1 0 81.5 881"/><line x1="73.5" y1="888" x2="81.5" y2="888"/><rect x="74.5" y="883" width="1" height="1.5" fill="#0010d0"/><rect x="79.5" y="883" width="1" height="1.5" fill="#0010d0"/></g>
<g fill="none" stroke="#0010d0" stroke-width="1.3"><path d="M369 881 A7 7 0 1 0 377 881"/><path d="M369 888 Q373 892 377 888"/><rect x="370" y="883" width="1" height="1.5" fill="#0010d0"/><rect x="375" y="883" width="1" height="1.5" fill="#0010d0"/></g>
<g fill="none" stroke="#0010d0" stroke-width="1.3"><path d="M836 881 A7 7 0 1 0 844 881"/><path d="M836 888 Q840 892 844 888"/><rect x="837" y="883" width="1" height="1.5" fill="#0010d0"/><rect x="842" y="883" width="1" height="1.5" fill="#0010d0"/></g>
<g fill="none" stroke="#0010d0" stroke-width="1.3"><path d="M1057.4 881 A7 7 0 1 0 1065.4 881"/><line x1="1057.4" y1="888" x2="1065.4" y2="888"/><rect x="1058.4" y="883" width="1" height="1.5" fill="#0010d0"/><rect x="1063.4" y="883" width="1" height="1.5" fill="#0010d0"/></g>
<g fill="none" stroke="#0010d0" stroke-width="1.3"><path d="M1084.8 881 A7 7 0 1 0 1092.8 881"/><path d="M1084.8 888 Q1088.8 892 1092.8 888"/><rect x="1085.8" y="883" width="1" height="1.5" fill="#0010d0"/><rect x="1090.8" y="883" width="1" height="1.5" fill="#0010d0"/></g>
<rect x="37" y="901" width="1823" height="40" fill="#000"/>
<rect x="37" y="900" width="1823" height="2" fill="#f0f0f0"/>
<rect x="37" y="920" width="1823" height="2" fill="#f0f0f0"/>
<rect x="37" y="939" width="1823" height="2" fill="#5a5a5a"/>
<rect x="217.3" y="901" width="2" height="39" fill="#f0f0f0"/>
<rect x="1127.2" y="901" width="2" height="39" fill="#f0f0f0"/>
<rect x="427.7" y="901" width="2" height="20" fill="#f0f0f0"/>
<rect x="640.7" y="901" width="2" height="20" fill="#f0f0f0"/>
<rect x="852.3" y="901" width="2" height="20" fill="#f0f0f0"/>
<rect x="1063.4" y="901" width="2" height="20" fill="#f0f0f0"/>
<rect x="1783.5" y="901" width="2" height="20" fill="#f0f0f0"/>
<rect x="1804.5" y="901" width="2" height="20" fill="#f0f0f0"/>
<rect x="1825.4" y="901" width="2" height="20" fill="#f0f0f0"/>
<rect x="1847.4" y="901" width="2" height="20" fill="#f0f0f0"/>
<text x="58" y="916" font-size="15" fill="#f4f4f4" text-anchor="middle">27</text>
<text x="100.8" y="916" font-size="15" fill="#f4f4f4" text-anchor="middle">28</text>
<text x="143.5" y="916" font-size="15" fill="#f4f4f4" text-anchor="middle">29</text>
<text x="186.2" y="916" font-size="15" fill="#f4f4f4" text-anchor="middle">30</text>
<text x="224.5" y="916" font-size="15" fill="#f4f4f4" text-anchor="middle">3</text>
<text x="266.7" y="916" font-size="15" fill="#f4f4f4" text-anchor="middle">4</text>
<text x="308.2" y="916" font-size="15" fill="#f4f4f4" text-anchor="middle">5</text>
<text x="350.6" y="916" font-size="15" fill="#f4f4f4" text-anchor="middle">6</text>
<text x="392.7" y="916" font-size="15" fill="#f4f4f4" text-anchor="middle">7</text>
<text x="440" y="916" font-size="15" fill="#f4f4f4" text-anchor="middle">10</text>
<text x="482.3" y="916" font-size="15" fill="#f4f4f4" text-anchor="middle">11</text>
<text x="525" y="916" font-size="15" fill="#f4f4f4" text-anchor="middle">12</text>
<text x="567.3" y="916" font-size="15" fill="#f4f4f4" text-anchor="middle">13</text>
<text x="610" y="916" font-size="15" fill="#f4f4f4" text-anchor="middle">14</text>
<text x="652.3" y="916" font-size="15" fill="#f4f4f4" text-anchor="middle">17</text>
<text x="694" y="916" font-size="15" fill="#f4f4f4" text-anchor="middle">18</text>
<text x="736.7" y="916" font-size="15" fill="#f4f4f4" text-anchor="middle">19</text>
<text x="778.3" y="916" font-size="15" fill="#f4f4f4" text-anchor="middle">20</text>
<text x="821" y="916" font-size="15" fill="#f4f4f4" text-anchor="middle">21</text>
<text x="863.3" y="916" font-size="15" fill="#f4f4f4" text-anchor="middle">24</text>
<text x="906" y="916" font-size="15" fill="#f4f4f4" text-anchor="middle">25</text>
<text x="948.3" y="916" font-size="15" fill="#f4f4f4" text-anchor="middle">26</text>
<text x="990.7" y="916" font-size="15" fill="#f4f4f4" text-anchor="middle">27</text>
<text x="1032.7" y="916" font-size="15" fill="#f4f4f4" text-anchor="middle">28</text>
<text x="1075" y="916" font-size="15" fill="#f4f4f4" text-anchor="middle">31</text>
<text x="1135" y="916" font-size="15" fill="#f4f4f4" text-anchor="middle">1</text>
<text x="1262.2" y="916" font-size="15" fill="#f4f4f4" text-anchor="middle">2</text>
<text x="1389.6" y="916" font-size="15" fill="#f4f4f4" text-anchor="middle">3</text>
<text x="1515.9" y="916" font-size="15" fill="#f4f4f4" text-anchor="middle">4</text>
<text x="1643.2" y="916" font-size="15" fill="#f4f4f4" text-anchor="middle">5</text>
<text x="1790.8" y="916" font-size="15" fill="#f4f4f4" text-anchor="middle">6</text>
<text x="1833.4" y="916" font-size="15" fill="#f4f4f4" text-anchor="middle">6</text>
<text x="220" y="936" font-size="15" fill="#f4f4f4">October</text>
<text x="1131" y="936" font-size="15" fill="#f4f4f4">November</text>
<rect x="1860" y="901" width="60" height="40" fill="#e4e4e4"/>
<rect x="1860" y="901" width="1" height="40" fill="#c0c0c0"/>
<g fill="none" stroke="#22dd22" stroke-width="1.6"><circle cx="1890" cy="920" r="9.5"/><path d="M1885 922 Q1890 927 1895 922"/></g><rect x="1886" y="915" width="2" height="3" fill="#22dd22"/><rect x="1892" y="915" width="2" height="3" fill="#22dd22"/>
<defs><linearGradient id="plogo" x1="0" y1="0" x2="1" y2="1"><stop offset="0" stop-color="#d8782a"/><stop offset="0.5" stop-color="#8a5040"/><stop offset="1" stop-color="#a02a10"/></linearGradient><linearGradient id="btn" x1="0" y1="0" x2="0" y2="1"><stop offset="0" stop-color="#fafafa"/><stop offset="1" stop-color="#d8d8d8"/></linearGradient><linearGradient id="grip" x1="0" y1="0" x2="1" y2="0"><stop offset="0" stop-color="#e8e8e8"/><stop offset="1" stop-color="#c4c4c4"/></linearGradient><linearGradient id="gripv" x1="0" y1="0" x2="0" y2="1"><stop offset="0" stop-color="#e8e8e8"/><stop offset="1" stop-color="#c4c4c4"/></linearGradient></defs>
<defs><radialGradient id="pr" cx="0.55" cy="0.45" r="0.6"><stop offset="0" stop-color="#2e2a28"/><stop offset="0.45" stop-color="#6a5a50"/><stop offset="1" stop-color="#b05020" stop-opacity="0"/></radialGradient></defs>
<rect x="5" y="74" width="25" height="25" fill="url(#plogo)"/><rect x="5" y="74" width="25" height="25" fill="url(#pr)"/>
<text x="17.5" y="92.5" font-size="15" font-weight="bold" fill="#f0f0ec" text-anchor="middle">P</text>
<rect x="43" y="66" width="1" height="38" fill="#b8b8b8"/><rect x="44" y="66" width="1" height="38" fill="#fff"/>
<rect x="51" y="68" width="9" height="36" fill="url(#grip)"/><rect x="60" y="68" width="1" height="36" fill="#909090"/><rect x="53.5" y="84.5" width="3" height="3" fill="#666"/>
<path d="M68 75 H81 L86 80 V97 H68 Z" fill="#a8d4ec" stroke="#7a7a7a" stroke-width="1.2"/><path d="M81 75 V80 H86" fill="#fff" stroke="#7a7a7a" stroke-width="1"/>
<path d="M101 78 H109 L111 80 H119 V84 H101 Z" fill="#f4f4f4" stroke="#8a8a8a"/><path d="M101 95 L105 85 H124 L120 95 Z" fill="#9ab8d8" stroke="#8a8a8a"/><rect x="101" y="80" width="1" height="15" fill="#8a8a8a"/>
<rect x="134.5" y="75.5" width="21" height="21" rx="2" fill="#f4f4f4" stroke="#7a7a7a"/><rect x="138" y="77" width="14" height="8" fill="#f2a4a8"/><rect x="138" y="88" width="13" height="8" fill="#a8a8a8"/><rect x="147" y="89" width="2" height="5" fill="#eee"/>
<rect x="165" y="72" width="1" height="28" fill="#a0a0a0"/><rect x="166" y="72" width="1" height="28" fill="#ffffff"/>
<rect x="175.5" y="77.5" width="21" height="8" rx="1" fill="#f0f0f0" stroke="#7a7a7a"/><rect x="178.5" y="83.5" width="15" height="13" fill="#eef4ee" stroke="#7a7a7a"/><rect x="180" y="87" width="9" height="1" fill="#555"/><rect x="180" y="90" width="5" height="1" fill="#555"/><rect x="180" y="93" width="10" height="1" fill="#555"/><rect x="193" y="79" width="2" height="2" fill="#3c3"/>
<rect x="209.5" y="75.5" width="14" height="17" fill="#f0f0f0" stroke="#aaa"/><circle cx="219" cy="84" r="5.5" fill="#a8cce8" stroke="#333" stroke-width="2"/><line x1="223" y1="88" x2="229" y2="95" stroke="#222" stroke-width="3" stroke-linecap="round"/>
<rect x="240" y="72" width="1" height="28" fill="#a0a0a0"/><rect x="241" y="72" width="1" height="28" fill="#ffffff"/>
<g fill="none" stroke="#555" stroke-width="2"><circle cx="256" cy="92" r="3"/><circle cx="266" cy="92" r="3"/><path d="M257 89 L266 76 M265 89 L256 76"/></g>
<path d="M284 75.5 H292 L295 78.5 V90 H284 Z" fill="#f4f4f4" stroke="#777"/><path d="M294 82.5 H302 L305 85.5 V96.5 H294 Z" fill="#f4f4f4" stroke="#777"/><g fill="#999"><rect x="286" y="80" width="6" height="1"/><rect x="286" y="83" width="6" height="1"/><rect x="296" y="88" width="7" height="1"/><rect x="296" y="91" width="7" height="1"/><rect x="296" y="94" width="7" height="1"/></g>
<rect x="319.5" y="77.5" width="20" height="19" rx="1" fill="#ecebe4" stroke="#7a7a7a"/><rect x="323" y="73.5" width="13" height="7" rx="2" fill="#f0c830" stroke="#b89818"/><g fill="#999"><rect x="324" y="84" width="11" height="1"/><rect x="324" y="87" width="5" height="1"/><rect x="324" y="90" width="4" height="1"/><rect x="324" y="93" width="11" height="1"/></g>
<rect x="349" y="72" width="1" height="28" fill="#a0a0a0"/><rect x="350" y="72" width="1" height="28" fill="#ffffff"/>
<path d="M360.7 84.2 L371.6 77.4 V81 C377 81.5 380 85 380 89 C380 93 375 96 368.4 96 C372 95 374.5 92 374.3 90 C374 88 372.5 87.8 371.6 87.8 V89.9 Z" fill="#5a9a62"/>
<rect x="390" y="72" width="1" height="28" fill="#a0a0a0"/><rect x="391" y="72" width="1" height="28" fill="#ffffff"/>
<g stroke="#2a8ac8" fill="none"><circle cx="411" cy="86" r="8" stroke-width="2.5"/><line x1="399" y1="86" x2="423" y2="86" stroke-width="2"/><line x1="411" y1="74" x2="411" y2="98" stroke-width="2"/></g>
<rect x="433" y="75.5" width="10" height="10" fill="none" stroke="#888" stroke-dasharray="2 1.5"/><circle cx="447" cy="87" r="5.5" fill="#c8dcf0" stroke="#333" stroke-width="2"/><line x1="451" y1="91" x2="456" y2="97" stroke="#222" stroke-width="3" stroke-linecap="round"/>
<rect x="466" y="72" width="1" height="28" fill="#a0a0a0"/><rect x="467" y="72" width="1" height="28" fill="#ffffff"/>
<rect x="470.5" y="73.5" width="219" height="26" rx="2" fill="#ffffff" stroke="#a8a8a8"/>
<rect x="476" y="79" width="16" height="15" fill="#1a5ab0"/><text x="484" y="92" font-size="13" font-style="italic" fill="#fff" text-anchor="middle">f</text>
<text x="497" y="91" font-size="14" fill="#111" textLength="46" lengthAdjust="spacingAndGlyphs">MB 002</text>
<path d="M674 84 L679 89 L684 84" fill="none" stroke="#444" stroke-width="1.4"/>
<rect x="693" y="72" width="1" height="28" fill="#a0a0a0"/><rect x="694" y="72" width="1" height="28" fill="#ffffff"/>
<ellipse cx="713" cy="90" rx="7" ry="7" fill="#f0e4e0" stroke="#666"/><ellipse cx="713" cy="81" rx="10.5" ry="2" fill="#1a1a1a"/><path d="M706 82 Q706 74 713 74 Q720 74 720 82 Z" fill="#333"/><rect x="708" y="87" width="2" height="2" fill="#235"/><rect x="716" y="87" width="2" height="2" fill="#235"/>
<text x="737" y="95" font-size="22" font-style="italic" font-family="Liberation Serif" fill="#e04a88">f</text><text x="746" y="96" font-size="10" font-family="Liberation Serif" fill="#e04a88">(x)</text>
<text x="781.5" y="96" font-size="22" font-weight="bold" fill="#2a8a3a" text-anchor="middle">$</text>
<g><rect x="806" y="75" width="4" height="3" fill="#e8b820"/><rect x="819" y="75" width="4" height="3" fill="#e8b820"/><rect x="804" y="78" width="8" height="16" rx="2" fill="#7a7a7a"/><rect x="817" y="78" width="8" height="16" rx="2" fill="#7a7a7a"/><rect x="811" y="82" width="7" height="6" fill="#555"/><rect x="804" y="93" width="8" height="3" fill="#e8b820"/><rect x="817" y="93" width="8" height="3" fill="#e8b820"/></g>
<g fill="#3aa0e0"><rect x="836" y="82" width="1.5" height="8"/><rect x="839" y="82" width="1.5" height="8"/><rect x="842" y="82" width="1.5" height="8"/><path d="M845 83 H853 V80 L862 86 L853 92 V89 H845 Z"/></g>
<path d="M879 75 H885 V80 H888 L882 86 L876 80 H879 Z" fill="#2a90e0"/><rect x="872.5" y="86.5" width="21" height="10" rx="1.5" fill="#f0f0f0" stroke="#777"/><rect x="875" y="92" width="15" height="1.5" fill="#666"/><rect x="889" y="88.5" width="2" height="2" fill="#3c3"/>
<g fill="none" stroke="#2a80d0" stroke-width="2.2"><path d="M906 96 H926"/><path d="M910 92 Q922 94 922 86 Q922 81 917 81"/></g><rect x="912" y="75" width="6" height="14" rx="2" fill="#7a8aa0"/>
<rect x="939.5" y="74.5" width="22" height="23" fill="#fff" stroke="#2a4a7a" stroke-width="1.5"/><g fill="#aab"><rect x="942" y="78" width="3" height="3"/><rect x="947" y="79" width="11" height="1"/><rect x="942" y="83" width="8" height="1"/><rect x="942" y="86" width="4" height="3"/><rect x="942" y="92" width="14" height="1"/></g><circle cx="955" cy="90" r="4.5" fill="#d0e4f4" stroke="#222" stroke-width="2"/><line x1="958" y1="93" x2="962" y2="98" stroke="#222" stroke-width="2.5"/>
<path d="M974 80 L984 86 L980 87 L983 93 L981 94 L978 88 L975 91 Z" fill="#f8f8f8" stroke="#666" stroke-width="1.2"/><text x="991" y="96" font-size="20" font-weight="bold" fill="#2a9a2a" text-anchor="middle">?</text>
<rect x="1008" y="67" width="1" height="36" fill="#a8a8a8"/>
<rect x="1018" y="68" width="9" height="36" fill="url(#grip)"/><rect x="1027" y="68" width="1" height="36" fill="#909090"/><rect x="1020.5" y="84.5" width="3" height="3" fill="#666"/>
<rect x="1032.5" y="75.5" width="15" height="11" fill="#f0f0f0" stroke="#8a8a8a" stroke-width="1.2"/><rect x="1033" y="76" width="14" height="2" fill="#d8d8d8"/><rect x="1035.5" y="79.5" width="15" height="11" fill="#f0f0f0" stroke="#8a8a8a" stroke-width="1.2"/><rect x="1036" y="80" width="14" height="2" fill="#d8d8d8"/><rect x="1039.5" y="84.5" width="15" height="13" fill="#f0f0f0" stroke="#8a8a8a" stroke-width="1.2"/><rect x="1040" y="85" width="14" height="2" fill="#d8d8d8"/><path d="M1041 94 L1045 91 L1048 93 L1053 88" fill="none" stroke="#888"/>
<rect x="1066.5" y="75.5" width="23" height="23" fill="#f0f0f0" stroke="#8a8a8a" stroke-width="1.2"/><rect x="1067" y="76" width="22" height="2" fill="#d8d8d8"/><rect x="1077" y="75" width="2" height="23" fill="#8a8a8a"/><path d="M1067 90 L1071 85 L1074 88 L1078 83 L1082 89 L1088 84" fill="none" stroke="#888"/>
<rect x="1099.5" y="75.5" width="24" height="23" fill="#f0f0f0" stroke="#8a8a8a" stroke-width="1.2"/><rect x="1100" y="76" width="23" height="2" fill="#d8d8d8"/><rect x="1099" y="86" width="24" height="2" fill="#8a8a8a"/><path d="M1100 83 L1105 80 L1110 82 L1114 78 L1122 83 M1100 95 L1105 92 L1110 94 L1114 90 L1122 95" fill="none" stroke="#888"/>
<rect x="1133.5" y="76.5" width="24" height="20" fill="#f0f0f0" stroke="#8a8a8a" stroke-width="1.2"/><rect x="1134" y="77" width="23" height="2" fill="#d8d8d8"/><rect x="1144" y="76" width="2" height="20" fill="#8a8a8a"/><rect x="1133" y="85" width="24" height="2" fill="#8a8a8a"/>
<rect x="1167.5" y="76.5" width="24" height="20" fill="#f0f0f0" stroke="#8a8a8a" stroke-width="1.2"/><rect x="1168" y="77" width="23" height="2" fill="#d8d8d8"/><circle cx="1179" cy="86" r="5" fill="#333"/><circle cx="1179" cy="86" r="7" fill="none" stroke="#333" stroke-width="2.5" stroke-dasharray="2.5 2.5"/><circle cx="1179" cy="86" r="2" fill="#ddd"/>
<rect x="1204" y="67" width="1" height="36" fill="#a8a8a8"/>
<rect x="0" y="106" width="35" height="1" fill="#ffffff"/>
<rect x="0" y="112" width="35" height="7" fill="url(#gripv)"/><rect x="15.5" y="113.5" width="3" height="3" fill="#666"/>
<rect x="0.5" y="122.5" width="30" height="31" rx="3" fill="#e4f2fe" stroke="#9ccff8"/>
<path d="M6 129 L22 138 L16 140 L21 147 L18 149 L13 142 L9 147 Z" fill="#aad4f8" stroke="#2a6ac8" stroke-width="1.5" stroke-linejoin="round"/>
<rect x="2.5" y="159.5" width="23" height="24" fill="url(#btn)" stroke="#c0c0c0"/>
<rect x="6" y="170" width="16" height="2.4" fill="#333"/><rect x="12.8" y="163" width="2.4" height="16" fill="#333"/>
<rect x="2" y="190" width="24" height="1" fill="#b0b0b0"/>
<rect x="2.5" y="199.5" width="23" height="24" fill="url(#btn)" stroke="#c0c0c0"/>
<line x1="6" y1="203" x2="22" y2="219" stroke="#333" stroke-width="2"/>
<rect x="2.5" y="232.5" width="23" height="23" fill="url(#btn)" stroke="#c0c0c0"/>
<rect x="5" y="242.8" width="17" height="2.4" fill="#333"/>
<rect x="2.5" y="264.5" width="23" height="23" fill="url(#btn)" stroke="#c0c0c0"/>
<rect x="12.8" y="268" width="2.4" height="16" fill="#333"/>
<rect x="2.5" y="297.5" width="23" height="23" fill="url(#btn)" stroke="#c0c0c0"/>
<line x1="5" y1="300" x2="22" y2="318" stroke="#333" stroke-width="1.6"/><text x="5" y="317" font-size="9" fill="#333">S</text><text x="16" y="308" font-size="9" fill="#333">L</text>
<rect x="0" y="333" width="35" height="1" fill="#fff"/>
<rect x="0" y="341" width="35" height="7" fill="url(#gripv)"/><rect x="15.5" y="342.5" width="3" height="3" fill="#666"/>
<rect x="0.5" y="352.5" width="12.5" height="30" fill="#ececec" stroke="#c8c8c8"/><rect x="15.5" y="352.5" width="14" height="30" fill="#ececec" stroke="#c8c8c8"/>
<path d="M4 367 L8 363 V371 Z" fill="#111"/><path d="M24 367 L20 363 V371 Z" fill="#111"/>
<rect x="2" y="387" width="24" height="1" fill="#b0b0b0"/>
<rect x="2.5" y="396.5" width="23" height="22" fill="url(#btn)" stroke="#c0c0c0"/>
<text x="14" y="412" font-size="12" fill="#333" text-anchor="middle" textLength="18" lengthAdjust="spacingAndGlyphs">abc</text>
<rect x="2.5" y="428.5" width="23" height="23" fill="url(#btn)" stroke="#c0c0c0"/>
<g fill="#888"><rect x="3" y="435" width="22" height="1.5"/><rect x="3" y="443" width="22" height="1.5"/><rect x="9" y="429" width="1.5" height="22"/><rect x="17" y="429" width="1.5" height="22"/></g>
<rect x="2" y="459" width="24" height="1" fill="#b0b0b0"/>
<ellipse cx="13.5" cy="479.5" rx="11" ry="7" fill="#e4e8ec" stroke="#333" stroke-width="1.2"/>
<rect x="3" y="505.5" width="21" height="15" rx="1" fill="url(#btn)" stroke="#333" stroke-width="1.2"/>
<path d="M3 551.5 L13.5 537 L24.5 551.5 Z" fill="#f4f4f4" stroke="#333" stroke-width="1.2" stroke-linejoin="round"/>
<rect x="0" y="970" width="36" height="1" fill="#b8b8b8"/>
<rect x="37" y="941" width="1883" height="30" fill="#f0f0f0"/>
<rect x="1393" y="952" width="253" height="7" fill="#8a8a8a"/>
<rect x="1669" y="946" width="1" height="22" fill="#a8a8a8"/><rect x="1730" y="946" width="1" height="22" fill="#a8a8a8"/><rect x="1842" y="946" width="1" height="22" fill="#a8a8a8"/>
<g fill="none" stroke="#555" stroke-width="2.4"><path d="M1681 953 A7 7 0 0 1 1694 952"/><path d="M1695 958 A7 7 0 0 1 1682 959"/></g><path d="M1691 948 L1697 952 L1691 955 Z" fill="#555"/><path d="M1685 963 L1679 959 L1685 956 Z" fill="#555"/>
<rect x="1713" y="950" width="2" height="11" fill="#555"/>
<path d="M1748 947 L1752 952 H1749 V959 H1752 L1748 964 L1744 959 H1747 V952 H1744 Z" fill="#555"/>
<path d="M1774 945 L1778 950 H1775.5 V954 H1780 V951 L1785 955.5 L1780 960 V957 H1775.5 V961 H1778 L1774 966 L1770 961 H1772.5 V957 H1768 V960 L1763 955.5 L1768 951 V954 H1772.5 V950 H1770 Z" fill="#555"/>
<circle cx="1800" cy="955.5" r="7" fill="none" stroke="#555" stroke-width="1.6"/><rect x="1796" y="954.5" width="8" height="2" fill="#555"/>
<circle cx="1826" cy="955.5" r="7" fill="none" stroke="#555" stroke-width="1.6"/><rect x="1822" y="954.5" width="8" height="2" fill="#555"/><rect x="1825" y="951.5" width="2" height="8" fill="#555"/>
<path d="M1862 951 L1858 955.5 L1862 960" fill="none" stroke="#bbb" stroke-width="1.5"/><path d="M1885 951 L1889 955.5 L1885 960" fill="none" stroke="#bbb" stroke-width="1.5"/>
<rect x="1904.5" y="948.5" width="14" height="14" fill="#fff" stroke="#555"/><g fill="#555"><rect x="1905" y="951" width="13" height="1"/><rect x="1905" y="954" width="13" height="1"/><rect x="1905" y="957" width="13" height="1"/><rect x="1905" y="960" width="13" height="1"/><rect x="1908" y="949" width="1" height="13"/></g>
<rect x="0" y="971" width="1920" height="40" fill="#e9e9e9"/>
<rect x="0" y="971" width="1920" height="1" fill="#d4d4d4"/>
<rect x="0" y="1010" width="1920" height="1.5" fill="#a8a8a8"/>
<rect x="0" y="974" width="9" height="36" fill="url(#grip)"/><rect x="3" y="991" width="2" height="2" fill="#555"/>
<rect x="10.5" y="980.5" width="161" height="24" rx="2" fill="#fff" stroke="#a8a8a8"/><rect x="30" y="992.5" width="101" height="1.6" fill="#333"/><path d="M156 990 L161 995 L166 990" fill="none" stroke="#444" stroke-width="1.4"/>
<rect x="174" y="978" width="1" height="30" fill="#a8a8a8"/>
<rect x="180.5" y="980.5" width="124" height="24" rx="2" fill="#fff" stroke="#a8a8a8"/><rect x="195" y="992.5" width="73" height="1.6" fill="#333"/><path d="M288 990 L293 995 L298 990" fill="none" stroke="#444" stroke-width="1.4"/>
<rect x="314" y="974" width="1" height="36" fill="#b0b0b0"/><rect x="320" y="974" width="9" height="36" fill="url(#grip)"/><rect x="324" y="991" width="2" height="2" fill="#555"/>
<rect x="334" y="980" width="12" height="12" fill="#0000ff" stroke="#a4a4a4" stroke-width="1"/>
<rect x="349" y="980" width="12" height="12" fill="#ff0000" stroke="#a4a4a4" stroke-width="1"/>
<rect x="364" y="980" width="12" height="12" fill="#afeeee" stroke="#a4a4a4" stroke-width="1"/>
<rect x="379" y="980" width="12" height="12" fill="#7fffd4" stroke="#a4a4a4" stroke-width="1"/>
<rect x="394" y="980" width="12" height="12" fill="#7b7bc0" stroke="#a4a4a4" stroke-width="1"/>
<rect x="409" y="980" width="12" height="12" fill="#ffa858" stroke="#a4a4a4" stroke-width="1"/>
<rect x="424" y="980" width="12" height="12" fill="#ffc0cb" stroke="#a4a4a4" stroke-width="1"/>
<rect x="439" y="980" width="12" height="12" fill="#e6e6fa" stroke="#a4a4a4" stroke-width="1"/>
<rect x="334" y="995" width="12" height="12" fill="#ffd700" stroke="#a4a4a4" stroke-width="1"/>
<rect x="349" y="995" width="12" height="12" fill="#ffff00" stroke="#a4a4a4" stroke-width="1"/>
<rect x="364" y="995" width="12" height="12" fill="#696969" stroke="#a4a4a4" stroke-width="1"/>
<rect x="379" y="995" width="12" height="12" fill="#32cd32" stroke="#a4a4a4" stroke-width="1"/>
<rect x="394" y="995" width="12" height="12" fill="#ffffe0" stroke="#a4a4a4" stroke-width="1"/>
<rect x="409" y="995" width="12" height="12" fill="#ff6a20" stroke="#a4a4a4" stroke-width="1"/>
<rect x="424" y="995" width="12" height="12" fill="#98fb98" stroke="#a4a4a4" stroke-width="1"/>
<rect x="439" y="995" width="12" height="12" fill="#8b0000" stroke="#a4a4a4" stroke-width="1"/>
<rect x="348" y="978.5" width="15" height="15" fill="none" stroke="#888" stroke-dasharray="1 1"/>
<path d="M455 992 L461 992 L458 996 Z" fill="#111"/>
<rect x="474" y="974" width="1" height="36" fill="#b0b0b0"/><rect x="480" y="974" width="9" height="36" fill="url(#grip)"/><rect x="484" y="991" width="2" height="2" fill="#555"/>
<rect x="498.5" y="986.5" width="20" height="15" rx="1" fill="#f8f8ff" stroke="#8aa0b8"/><rect x="499" y="987" width="19" height="2" fill="#c8d8f0"/><path d="M501 998 L505 993" stroke="#d01010" stroke-width="1.4"/><text x="511" y="999" font-size="11" font-family="Liberation Serif" fill="#333" text-anchor="middle">1</text>
<rect x="532.5" y="986.5" width="20" height="15" rx="1" fill="#f8f8ff" stroke="#8aa0b8"/><rect x="533" y="987" width="19" height="2" fill="#c8d8f0"/><path d="M535 998 L539 993" stroke="#d01010" stroke-width="1.4"/><text x="545" y="999" font-size="11" font-family="Liberation Serif" fill="#333" text-anchor="middle">2</text>
<rect x="566.5" y="986.5" width="20" height="15" rx="1" fill="#f8f8ff" stroke="#8aa0b8"/><rect x="567" y="987" width="19" height="2" fill="#c8d8f0"/><path d="M569 998 L573 993" stroke="#d01010" stroke-width="1.4"/><text x="579" y="999" font-size="11" font-family="Liberation Serif" fill="#333" text-anchor="middle">3</text>
<rect x="600.5" y="986.5" width="20" height="15" rx="1" fill="#f8f8ff" stroke="#8aa0b8"/><rect x="601" y="987" width="19" height="2" fill="#c8d8f0"/><path d="M603 998 L607 993" stroke="#d01010" stroke-width="1.4"/><text x="613" y="999" font-size="11" font-family="Liberation Serif" fill="#333" text-anchor="middle">4</text>
<rect x="634.5" y="986.5" width="20" height="15" rx="1" fill="#f8f8ff" stroke="#8aa0b8"/><rect x="635" y="987" width="19" height="2" fill="#c8d8f0"/><path d="M637 998 L641 993" stroke="#d01010" stroke-width="1.4"/><text x="647" y="999" font-size="11" font-family="Liberation Serif" fill="#333" text-anchor="middle">5</text>
<rect x="668.5" y="986.5" width="20" height="15" rx="1" fill="#f8f8ff" stroke="#8aa0b8"/><rect x="669" y="987" width="19" height="2" fill="#c8d8f0"/><path d="M671 998 L675 993" stroke="#d01010" stroke-width="1.4"/><text x="681" y="999" font-size="11" font-family="Liberation Serif" fill="#333" text-anchor="middle">6</text>
<rect x="703" y="974" width="1" height="36" fill="#b0b0b0"/>
<rect x="0" y="1011" width="1920" height="9" fill="#3e3e3e"/>
<rect x="1845" y="1016" width="25" height="4" fill="#f0f0f0"/><rect x="1874" y="1016" width="27" height="4" fill="#e8eef8"/>
<rect x="0" y="1020" width="1920" height="60" fill="#201c23"/>
<defs><linearGradient id="sun" x1="0" y1="0" x2="1" y2="1"><stop offset="0" stop-color="#f8a040"/><stop offset="1" stop-color="#f85a6a"/></linearGradient><linearGradient id="cld" x1="0" y1="0" x2="0" y2="1"><stop offset="0" stop-color="#a4c4f4"/><stop offset="1" stop-color="#dce8fa"/></linearGradient></defs>
<circle cx="48.6" cy="1045" r="6.5" fill="url(#sun)"/>
<path d="M30 1060 Q25 1060 26 1054 Q27 1050 31 1050 Q32 1041 40 1041 Q46 1041 48 1047 Q56 1047 56 1054 Q56 1060 50 1060 Z" fill="url(#cld)"/>
<text x="65.8" y="1045.7" font-size="14.5" fill="#f4f4f4">18°C</text>
<text x="65.8" y="1065.6" font-size="14.5" fill="#d8d8d8" textLength="89" lengthAdjust="spacingAndGlyphs">Ger. Nublado</text>
<defs><linearGradient id="win" x1="0" y1="0" x2="1" y2="1"><stop offset="0" stop-color="#7ad8fa"/><stop offset="1" stop-color="#1a9ef0"/></linearGradient></defs>
<g fill="url(#win)"><rect x="506" y="1036" width="14" height="14" rx="1"/><rect x="521.5" y="1036" width="14" height="14" rx="1"/><rect x="506" y="1051.5" width="14" height="14" rx="1"/><rect x="521.5" y="1051.5" width="14" height="14" rx="1"/></g>
<circle cx="578" cy="1047" r="10.5" fill="#3a3a3e" stroke="#e4e4e4" stroke-width="3"/><line x1="570" y1="1055" x2="563" y2="1063" stroke="#e4e4e4" stroke-width="3.2" stroke-linecap="round"/>
<circle cx="630" cy="1049" r="14" fill="#6b5ad8"/><path d="M617 1056 L616 1064 L624 1060 Z" fill="#6b5ad8"/><rect x="622" y="1043" width="12" height="11" rx="2" fill="#fff"/><path d="M634 1048 L639 1044 V1054 L634 1050 Z" fill="#fff"/>
<rect x="683" y="1039" width="16" height="22" fill="#f4f4f4"/><g fill="#2b579a"><rect x="686" y="1043" width="10" height="1.5"/><rect x="686" y="1047" width="10" height="1.5"/><rect x="686" y="1051" width="10" height="1.5"/><rect x="686" y="1055" width="10" height="1.5"/></g><path d="M672 1039 L690 1036 V1065 L672 1062 Z" fill="#2b579a"/><text x="680.5" y="1056" font-size="12" font-weight="bold" fill="#fff" text-anchor="middle">W</text>
<defs><linearGradient id="msg" x1="0" y1="0" x2="0" y2="1"><stop offset="0" stop-color="#9a9a9a"/><stop offset="0.55" stop-color="#2a2a2a"/><stop offset="1" stop-color="#050505"/></linearGradient></defs>
<rect x="726" y="1035" width="30" height="30" rx="3" fill="url(#msg)"/><g fill="#f88a20"><rect x="733" y="1051" width="3.5" height="11"/><path d="M738 1046 H742 L741 1062 H737.5 Z"/><path d="M744 1038 H748 L746 1062 H742.5 Z"/></g>
<path d="M781 1038 H792 L795 1041 H810 V1064 H781 Z" fill="#e8b020"/><rect x="781" y="1043" width="30" height="21" fill="#f8d050"/><rect x="789" y="1056" width="15" height="6" rx="2" fill="#1a78d0"/>
<circle cx="850.5" cy="1050" r="15" fill="#db4437"/><path d="M850.5 1050 L863.5 1042.5 A15 15 0 0 1 850.5 1065 Z" fill="#f4c20d"/><path d="M850.5 1050 L850.5 1065 A15 15 0 0 1 837.5 1042.5 Z" fill="#0f9d58"/><circle cx="850.5" cy="1050" r="6.8" fill="#fff"/><circle cx="850.5" cy="1050" r="5.1" fill="#4285f4"/>
<circle cx="862" cy="1039" r="10" fill="#5a88d8"/><circle cx="862" cy="1036" r="3" fill="#1a2a50"/><path d="M856 1044 Q862 1037 868 1044 Z" fill="#1a2a50"/>
<rect x="905" y="1039" width="15" height="22" fill="#f4f4f4"/><path d="M891 1039 L912 1036 V1065 L891 1062 Z" fill="#d04a28"/><text x="901" y="1056" font-size="13" font-weight="bold" fill="#fff" text-anchor="middle">P</text><g fill="#d04a28"><rect x="913" y="1045" width="5" height="1.5"/><rect x="913" y="1050" width="5" height="1.5"/></g>
<path d="M960 1034 L972 1064 H948 Z" fill="#f08010"/><path d="M955 1047 H965 L967 1052 H953 Z M951 1057 H969 L970 1060 H950 Z" fill="#fff"/><rect x="946" y="1062" width="28" height="3" rx="1" fill="#e07010"/>
<defs><linearGradient id="edg" x1="0" y1="1" x2="1" y2="0"><stop offset="0" stop-color="#1a8ee0"/><stop offset="0.55" stop-color="#30b8e8"/><stop offset="1" stop-color="#60e070"/></linearGradient></defs>
<circle cx="1016" cy="1050" r="15" fill="url(#edg)"/>
<path d="M1001.5 1053 Q1003 1041 1013 1041 Q1021 1041 1022 1046 Q1012 1043 1009 1051 Q1008 1061 1022 1064 Q1016 1066 1011 1065 Q1003 1062 1001.5 1053 Z" fill="#145fb8"/>
<ellipse cx="1018.5" cy="1052" rx="5.5" ry="3.6" fill="#201c23"/>
<path d="M1013 1056 Q1024 1058 1031 1053 Q1029 1060 1022 1064 Q1012 1062 1013 1056 Z" fill="#1a78d8"/>
<rect x="1072" y="1039" width="15" height="22" fill="#f4f4f4"/><path d="M1057 1039 L1076 1036 V1065 L1057 1062 Z" fill="#3955a3"/><text x="1066" y="1056" font-size="13" font-weight="bold" fill="#fff" text-anchor="middle">V</text><g fill="#3955a3"><rect x="1078" y="1044" width="6" height="6"/><rect x="1078" y="1053" width="6" height="4"/></g>
<rect x="1127" y="1039" width="15" height="22" fill="#f4f4f4"/><g fill="#207245"><rect x="1129" y="1043" width="11" height="1.5"/><rect x="1129" y="1047" width="11" height="1.5"/><rect x="1129" y="1051" width="11" height="1.5"/><rect x="1129" y="1055" width="11" height="1.5"/><rect x="1134" y="1041" width="1.5" height="17"/></g><path d="M1111 1039 L1131 1036 V1065 L1111 1062 Z" fill="#207245"/><text x="1121" y="1056" font-size="13" font-weight="bold" fill="#fff" text-anchor="middle">X</text>
<circle cx="1180" cy="1050" r="15" fill="#db4437"/><path d="M1180 1050 L1193.0 1042.5 A15 15 0 0 1 1180 1065 Z" fill="#f4c20d"/><path d="M1180 1050 L1180 1065 A15 15 0 0 1 1167.0 1042.5 Z" fill="#0f9d58"/><circle cx="1180" cy="1050" r="6.8" fill="#fff"/><circle cx="1180" cy="1050" r="5.1" fill="#4285f4"/>
<rect x="1224" y="1035" width="23" height="30" rx="2" fill="#8e9aa8"/><rect x="1227" y="1038" width="17" height="5" fill="#48c8f4"/><g fill="#dde2e8"><rect x="1227" y="1045" width="5" height="5"/><rect x="1227" y="1051" width="5" height="5"/><rect x="1227" y="1057" width="5" height="5"/><rect x="1233" y="1045" width="5" height="5"/><rect x="1233" y="1051" width="5" height="5"/><rect x="1233" y="1057" width="5" height="5"/><rect x="1239" y="1045" width="5" height="5"/></g><rect x="1239" y="1051" width="5" height="11" fill="#1a4a98"/>
<rect x="1276" y="1035" width="30" height="30" fill="#108484"/>
<path d="M1282 1062 Q1291 1065 1300 1062 L1299 1055 Q1306 1050 1303 1045 Q1300 1040 1294 1044 Q1293 1040 1291 1039 Q1289 1040 1288 1044 Q1282 1040 1279 1045 Q1276 1050 1283 1055 Z" fill="#f8f8f8" stroke="#111" stroke-width="1.2"/>
<path d="M1283 1056 H1299 M1283 1059 H1299" stroke="#555" stroke-width="0.8"/><rect x="1290.5" y="1034.5" width="1.4" height="5" fill="#111"/><rect x="1289" y="1036" width="4.4" height="1.2" fill="#111"/>
<rect x="1321" y="1025" width="49" height="50" rx="4" fill="#34323a"/>
<rect x="1330" y="1035" width="30" height="30" rx="3" fill="url(#msg)"/><g fill="#f88a20"><rect x="1337" y="1051" width="3.5" height="11"/><path d="M1342 1046 H1346 L1345 1062 H1341.5 Z"/><path d="M1348 1038 H1352 L1350 1062 H1346.5 Z"/></g>
<rect x="1376" y="1025" width="49" height="50" rx="4" fill="#44262a"/>
<rect x="1386" y="1035" width="30" height="29" rx="4" fill="none" stroke="#9a1830" stroke-width="1.3"/><text x="1401" y="1060" font-size="13" fill="#b01838" text-anchor="middle">Pro</text><rect x="1392" y="1043" width="8" height="2" fill="#5a1a20"/>
<rect x="682" y="1071" width="8" height="3" rx="1.5" fill="#9a9a9e"/>
<rect x="847" y="1071" width="8" height="3" rx="1.5" fill="#9a9a9e"/>
<rect x="1121" y="1071" width="8" height="3" rx="1.5" fill="#9a9a9e"/>
<rect x="1231" y="1071" width="8" height="3" rx="1.5" fill="#9a9a9e"/>
<rect x="1336" y="1071" width="18" height="3" rx="1.5" fill="#4cc2ff"/>
<rect x="1396" y="1071" width="8" height="3" rx="1.5" fill="#f08090"/>
<path d="M1662 1055 L1670 1047 L1678 1055" fill="none" stroke="#eee" stroke-width="1.5"/>
<g fill="none" stroke="#f4f4f4" stroke-width="2"><path d="M1695 1047 A14 14 0 0 1 1715 1047"/><path d="M1698 1051 A9 9 0 0 1 1712 1051"/><path d="M1701 1055 A5 5 0 0 1 1709 1055"/></g><circle cx="1705" cy="1058" r="1.8" fill="#f4f4f4"/>
<path d="M1725 1046 H1729 L1734 1042 V1058 L1729 1054 H1725 Z" fill="none" stroke="#f4f4f4" stroke-width="1.5"/><path d="M1737 1046 Q1740 1050 1737 1054" fill="none" stroke="#f4f4f4" stroke-width="1.5"/><path d="M1740 1043 Q1745 1050 1740 1057" fill="none" stroke="#888" stroke-width="1.5"/>
<rect x="1761" y="1043" width="14" height="13" rx="2" fill="none" stroke="#f4f4f4" stroke-width="1.6"/><rect x="1775" y="1047" width="2" height="5" fill="#f4f4f4"/><rect x="1763" y="1046" width="5" height="8" fill="#f4f4f4"/><path d="M1757 1041 V1046 M1760 1041 V1046 M1756 1046 H1761 V1049 H1756 Z" stroke="#f4f4f4" fill="#f4f4f4" stroke-width="1"/>
<text x="1867" y="1046" font-size="14" fill="#f4f4f4" text-anchor="end">18:01</text>
<text x="1867" y="1066" font-size="14" fill="#f4f4f4" text-anchor="end" textLength="72" lengthAdjust="spacingAndGlyphs">31/10/2022</text>
<circle cx="1886" cy="1050" r="10" fill="#4cc2ff"/><text x="1886" y="1055" font-size="13" fill="#111" text-anchor="middle">1</text>
</svg></body></html>
